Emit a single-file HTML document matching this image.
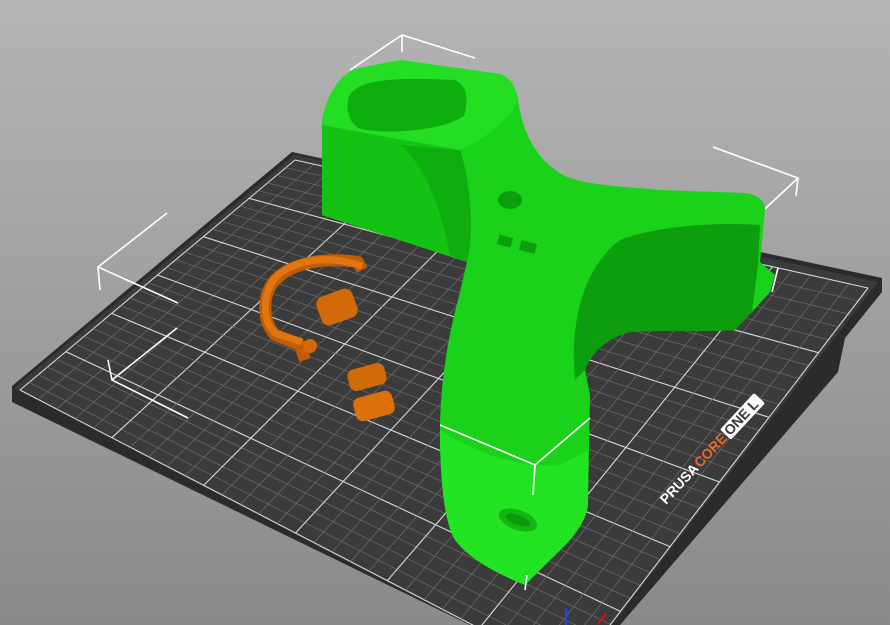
<!DOCTYPE html>
<html><head><meta charset="utf-8"><style>
html,body{margin:0;padding:0;width:890px;height:625px;overflow:hidden;background:linear-gradient(#b4b4b4,#8a8a8a);}
svg{position:absolute;left:0;top:0}
.lbl{font-family:"Liberation Sans",sans-serif;font-weight:bold;font-size:14px}
</style></head><body>
<svg width="890" height="625" viewBox="0 0 890 625">
<defs><clipPath id="bc"><polygon points="14,388 294,155 878,282 600,640 470,625"/></clipPath><clipPath id="fr"><rect width="890" height="625"/></clipPath></defs>
<g clip-path="url(#fr)">
<polygon points="12,386 292,152 882,278 882,292 845,338 838,372 620,625 470,625 12,402" fill="#2b2b2b"/>
<polygon points="14,388 294,155 878,282 600,640 470,625" fill="#3b3b3b"/>
<g id="grid" clip-path="url(#bc)"></g>
<g stroke="#fff" stroke-width="1.6" fill="none">
<polyline points="350,70 402,35 475,58"/><line x1="402" y1="35" x2="402" y2="52"/>
<polyline points="167,213 98,267 178,303"/><line x1="98" y1="267" x2="100" y2="290"/>
<polyline points="177,328 112,380 188,418"/><line x1="112" y1="380" x2="108" y2="360"/>
<polyline points="713,147 798,178 753,220"/><line x1="798" y1="178" x2="796" y2="196"/>
<line x1="778" y1="268" x2="772" y2="292"/>
</g>
<path d="M322,125 C322,110 335,72 360,68 L400,60 L500,74 Q515,80 518,100 C522,130 535,160 565,176 C590,186 620,186 660,190 L745,193 Q765,196 765,210 L760,262 L775,275 L770,292 L752,312 L735,330 C700,332 660,330 630,332 C605,338 590,355 585,370 L590,395 L588,505 C585,530 560,550 545,565 L525,585 C500,575 470,560 455,540 C443,520 440,470 440,430 C440,390 447,340 458,300 L467,262 L322,215 Z" fill="#1bd21b"/>
<path d="M322,125 L460,150 C470,180 475,230 467,262 L322,215 Z" fill="#14c214"/>
<path d="M400,145 C420,160 440,200 450,255 L467,262 C475,230 470,180 460,150 Z" fill="#0fae0f"/>
<path d="M322,125 C322,110 335,72 360,68 L400,60 L500,74 Q515,80 518,100 C510,120 490,135 460,150 Z" fill="#24de24"/>
<path d="M348,100 C352,82 380,76 455,80 Q472,88 464,116 C440,132 380,135 358,128 Q345,118 348,100 Z" fill="#0fae0f"/>
<path d="M575,380 C570,330 580,270 620,240 C660,225 720,222 760,225 L758,265 L752,312 L735,330 C700,332 660,330 630,332 C605,338 590,355 585,370 Z" fill="#0c9e0c"/>
<path d="M440,430 C470,450 520,470 560,465 L588,450 L588,505 C585,530 560,550 545,565 L525,585 C500,575 470,560 455,540 C443,520 440,470 440,430 Z" fill="#22e422"/>
<ellipse cx="510" cy="200" rx="12" ry="9" fill="#0d9e0d"/>
<rect x="498" y="236" width="14" height="10" fill="#0d9e0d" transform="rotate(15 505 241)"/>
<rect x="520" y="242" width="16" height="10" fill="#0d9e0d" transform="rotate(15 528 247)"/>
<ellipse cx="518" cy="520" rx="20" ry="10" fill="#12b512" transform="rotate(20 518 520)"/>
<ellipse cx="518" cy="520" rx="13" ry="5" fill="#0c9a0c" transform="rotate(20 518 520)"/>
<g stroke="#fff" stroke-width="1.6" fill="none">
<polyline points="440,425 535,465 590,418"/><line x1="535" y1="465" x2="533" y2="495"/>
<line x1="527" y1="575" x2="525" y2="590"/>
</g>
<path d="M362,270 L358,262 C330,258 295,260 275,280 C262,295 262,320 275,335 L300,345 L305,360" fill="none" stroke="#c05c05" stroke-width="12" stroke-linejoin="round"/>
<path d="M362,266 C330,255 295,258 275,278 C262,295 262,320 275,333 L302,342" fill="none" stroke="#e2750f" stroke-width="7"/>
<circle cx="310" cy="346" r="7" fill="#d26a0a"/>
<rect x="318" y="292" width="38" height="30" rx="8" fill="#d26a0a" transform="rotate(-20 337 307)"/>
<rect x="348" y="366" width="38" height="22" rx="7" fill="#d26a0a" transform="rotate(-15 367 377)"/>
<rect x="354" y="394" width="40" height="24" rx="7" fill="#dc700c" transform="rotate(-15 374 406)"/>
<g transform="translate(666,505) rotate(-47)">
<text class="lbl" x="0" y="0" fill="#fff">PRUSA</text>
<text class="lbl" x="50" y="0" fill="#e8692c">CORE</text>
<rect x="92" y="-12" width="50" height="15" rx="2" fill="#fff"/>
<text class="lbl" x="94" y="0" fill="#3a3a3a">ONE L</text>
</g>
<line x1="566" y1="625" x2="566" y2="608" stroke="#2040ff" stroke-width="2"/>
<line x1="598" y1="624" x2="606" y2="614" stroke="#e01010" stroke-width="2"/>
</g>
</svg>
<script>
(function(){
var L=[20,390],T=[295,160],R=[868,288],B=[571,676];
function lerp(a,b,t){return [a[0]+(b[0]-a[0])*t,a[1]+(b[1]-a[1])*t];}
var g=document.getElementById('grid'),s='',N=30;
for(var i=0;i<=N;i++){var t=i/N;var maj=(i%5==0);
var c=maj?'#d8d8d8':'#6e6e6e',w=maj?1.1:0.7;
var a=lerp(L,T,t),b=lerp(B,R,t);
s+='<line x1="'+a[0]+'" y1="'+a[1]+'" x2="'+b[0]+'" y2="'+b[1]+'" stroke="'+c+'" stroke-width="'+w+'"/>';
a=lerp(L,B,t);b=lerp(T,R,t);
s+='<line x1="'+a[0]+'" y1="'+a[1]+'" x2="'+b[0]+'" y2="'+b[1]+'" stroke="'+c+'" stroke-width="'+w+'"/>';}
g.innerHTML=s;
})();
</script>
</body></html>
